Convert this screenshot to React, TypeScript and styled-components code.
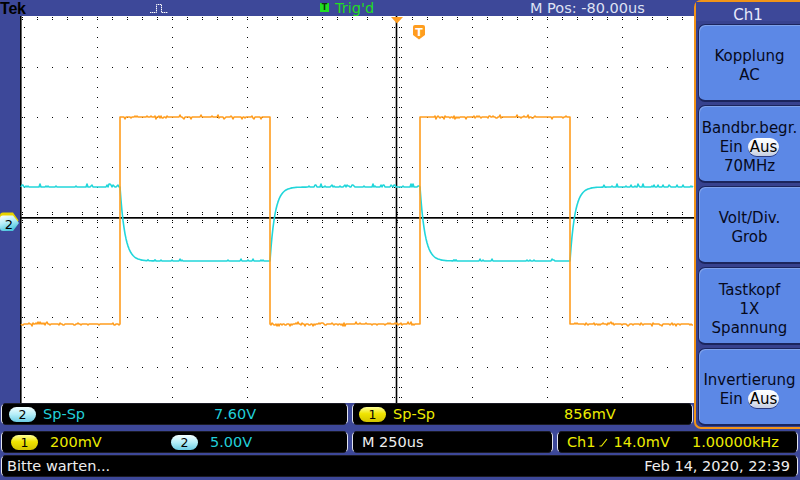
import React from 'react';
import styled, { createGlobalStyle } from 'styled-components';

const BLUE = '#3d4899';
const ORANGE = '#ff9d1f';
const MENU_ORANGE = '#f29418';
const CYAN_TRACE = '#22d6da';
const CYAN_TEXT = '#22cfd8';
const YELLOW_TEXT = '#ecec00';

const GlobalStyle = createGlobalStyle`
  html, body { margin: 0; padding: 0; background: ${BLUE}; }
  body { font-family: "DejaVu Sans", Verdana, sans-serif; }
  * { box-sizing: border-box; }
`;

/* ---------- layout ---------- */
const Screen = styled.div`
  width: 800px;
  height: 480px;
  background: ${BLUE};
  display: flex;
  flex-direction: column;
  overflow: hidden;
`;

const Upper = styled.div`
  display: flex;
  height: 429px;
  flex: none;
`;

const Main = styled.div`
  width: 694px;
  display: flex;
  flex-direction: column;
`;

const TopBar = styled.div`
  height: 16px;
  flex: none;
  display: grid;
  grid-template-columns: 150px 170px 210px 1fr;
  grid-template-rows: 16px;
  align-items: start;
  color: #dfe2f3;
  font-size: 14.5px;
  line-height: 16px;
  white-space: nowrap;
`;

const TekLogo = styled.span`
  font-family: "Liberation Sans", Arial, sans-serif;
  font-weight: 700;
  font-size: 16px;
  line-height: 18px;
  color: #000;
  letter-spacing: -0.2px;
`;

const TrigCell = styled.div`
  display: flex;
  align-items: flex-start;
  gap: 6px;
  color: #22dd22;
`;

const TrigIcon = styled.span`
  margin-top: 3px;
  width: 9px;
  height: 9px;
  background: #22e022;
  color: #0a3a0a;
  font-family: "DejaVu Sans", sans-serif;
  font-weight: 700;
  font-size: 8px;
  line-height: 9px;
  text-align: center;
`;

const PlotRow = styled.div`
  display: flex;
  height: 387px;
  flex: none;
`;

const LeftStrip = styled.div`
  width: 20px;
  flex: none;
`;

const MeasureRow = styled.div`
  height: 26px;
  flex: none;
  display: flex;
  gap: 4px;
  padding-left: 1px;
  align-items: flex-start;
`;

const Row = styled.div`
  display: flex;
  gap: 4px;
  padding-left: 1px;
  margin-top: 2px;
  height: 22px;
  flex: none;
`;

type Tone = 'cyan' | 'yellow' | 'white';
const toneColor = (t?: Tone) => (t === 'cyan' ? CYAN_TEXT : t === 'yellow' ? YELLOW_TEXT : '#eeeeee');

const Box = styled.div<{ $w: number; $pl?: number; $pr?: number }>`
  width: ${p => p.$w}px;
  height: 22px;
  flex: none;
  background: #000;
  border-style: solid;
  border-width: 1px;
  border-color: #1a1a24 #e2e4ee;
  border-radius: 5px;
  display: flex;
  align-items: center;
  padding-left: ${p => p.$pl ?? 0}px;
  padding-right: ${p => p.$pr ?? 0}px;
  font-size: 14.5px;
  line-height: 20px;
  white-space: nowrap;
  color: #eeeeee;
`;

const MeasureBox = styled(Box)`
  display: grid;
  grid-template-columns: 34px 171px auto;
  align-items: center;
`;

const Txt = styled.span<{ $tone?: Tone }>`
  color: ${p => toneColor(p.$tone)};
`;

const Badge = styled.span<{ $ch: 1 | 2 }>`
  display: inline-flex;
  align-items: center;
  justify-content: center;
  width: 27px;
  height: 15px;
  border-radius: 8px;
  background: ${p =>
    p.$ch === 1
      ? 'linear-gradient(#fdff9a, #f0e400 45%, #d2c400)'
      : 'linear-gradient(#f4ffff, #b4eef8 50%, #6ccde4)'};
  color: #000;
  font-size: 12.5px;
  line-height: 15px;
`;

const ScaleItem = styled.span<{ $w?: number }>`
  display: flex;
  align-items: center;
  gap: 12px;
  width: ${p => (p.$w ? `${p.$w}px` : 'auto')};
`;

const TrigInfo = styled.span`
  display: flex;
  align-items: center;
  width: 125px;
  color: ${YELLOW_TEXT};
`;

const SlopeIcon = styled.svg`
  margin: 0 6px 0 3px;
  flex: none;
`;

const SpaceBox = styled(Box)`
  justify-content: space-between;
`;

/* ---------- menu ---------- */
const Menu = styled.div`
  width: 106px;
  height: 429px;
  flex: none;
  border: 2px solid ${MENU_ORANGE};
  border-right: none;
  border-radius: 7px 0 0 7px;
  background: #37428f;
  display: flex;
  flex-direction: column;
  gap: 3px;
`;

const MenuHeader = styled.div`
  height: 19px;
  flex: none;
  padding-top: 6px;
  text-align: center;
  color: #e6e9fb;
  font-size: 15px;
  line-height: 14px;
  background: ${BLUE};
`;

const MenuButton = styled.div`
  margin-left: 2px;
  height: 78px;
  flex: none;
  padding-top: 7px;
  background: #5c88e6;
  border: 1px solid #1b255e;
  border-right: none;
  border-bottom-width: 2px;
  border-radius: 7px 0 0 7px;
  box-shadow: inset 1px 1px 0 rgba(255, 255, 255, 0.22);
  display: flex;
  flex-direction: column;
  align-items: center;
  justify-content: center;
  color: #070a1c;
  font-size: 15px;
  line-height: 19px;
  white-space: nowrap;
`;

const Pill = styled.span`
  display: inline-block;
  margin-left: 5px;
  padding: 0 2px;
  height: 18px;
  line-height: 18px;
  border-radius: 9px;
  background: linear-gradient(#ffffff, #eef2fa 50%, #c4cde0);
  box-shadow: 0 1px 0 #2a3a80;
  color: #000;
`;

/* ---------- waveform data ---------- */
function rng(seed: number) {
  let s = seed >>> 0;
  return () => {
    s = (s + 0x6d2b79f5) >>> 0;
    let t = s;
    t = Math.imul(t ^ (t >>> 15), t | 1);
    t ^= t + Math.imul(t ^ (t >>> 7), t | 61);
    return ((t ^ (t >>> 14)) >>> 0) / 4294967296;
  };
}

const XR = 693;

function buildDots(): string {
  const parts: string[] = [];
  const dot = (x: number, y: number) => parts.push(`M${x} ${y}h1v1h-1z`);
  for (let x = 22; x <= XR; x += 15) {
    dot(x, 17);
    dot(x, 19);
  }
  for (let y = 27; y < 403; y += 10) dot(24, y);
  for (let k = 1; k <= 9; k++) {
    const x = 22 + 75 * k;
    if (x > XR || x === 397) continue;
    for (let y = 27; y < 403; y += 10) dot(x, y);
  }
  for (let m = 1; m <= 7; m++) {
    const y = 17 + 50 * m;
    if (y === 217) continue;
    for (let x = 22; x <= XR; x += 15) dot(x, y);
  }
  for (let x = 22; x <= XR; x += 15) {
    dot(x, 212);
    dot(x, 214);
    dot(x, 220);
    dot(x, 222);
  }
  for (let y = 27; y < 403; y += 10) {
    dot(392, y);
    dot(394, y);
    dot(399, y);
    dot(401, y);
  }
  return parts.join('');
}

function buildOrange(): string {
  const r = rng(7);
  const HI = 117;
  const LO = 324;
  const edges = [120, 270, 420, 570];
  let level = LO;
  let d = `M21 ${LO}`;
  for (let x = 22; x <= XR; x++) {
    if (edges.includes(x)) {
      const prev = level;
      level = level === LO ? HI : LO;
      d += ` L${x} ${prev} L${x} ${level}`;
      continue;
    }
    const v = r();
    let dy = 0;
    if (v < 0.15) dy = 1;
    else if (v < 0.25) dy = -1;
    else if (v < 0.29) dy = 2;
    else if (v < 0.31) dy = -2;
    d += ` L${x} ${level + dy}`;
  }
  return d;
}

function buildCyan(): string {
  const r = rng(3);
  const HI = 187;
  const LO = 261;
  const edges = [
    { x: 120, from: HI, to: LO },
    { x: 270, from: LO, to: HI },
    { x: 420, from: HI, to: LO },
    { x: 570, from: LO, to: HI },
  ];
  let d = '';
  for (let x = 21; x <= XR; x++) {
    let y = HI;
    let settled = true;
    for (const e of edges) {
      if (x >= e.x) {
        const t = x - e.x;
        y = e.to + (e.from - e.to) * Math.exp(-t / 5);
        settled = t > 24;
      }
    }
    let noise = 0;
    const v = r();
    if (settled) {
      if (y < 220) {
        if (v < 0.26) noise = -1 - Math.floor(r() * 2.4);
      } else if (v < 0.12) noise = -1 - Math.floor(r() * 1.5);
    }
    d += `${x === 21 ? 'M' : ' L'}${x} ${(y + noise).toFixed(1)}`;
  }
  return d;
}

const DOTS = buildDots();
const ORANGE_PATH = buildOrange();
const CYAN_PATH = buildCyan();

/* ---------- drawings ---------- */
const Graticule: React.FC = () => (
  <svg width={674} height={387} viewBox="20 16 674 387" style={{ display: 'block' }}>
    <rect x={20} y={16} width={674} height={387} fill="#ffffff" />
    <rect x={20} y={16} width={1.6} height={387} fill="#000" />
    <path d={DOTS} fill="#000" />
    <rect x={20} y={217} width={674} height={1.7} fill="#000" />
    <rect x={395.7} y={16} width={1.6} height={387} fill="#000" />
    <path d={CYAN_PATH} fill="none" stroke={CYAN_TRACE} strokeWidth={1.6} strokeLinejoin="round" />
    <path d={ORANGE_PATH} fill="none" stroke={ORANGE} strokeWidth={1.6} strokeLinejoin="round" />
    <polygon points="391,17 403,17 397,23.5" fill={ORANGE} />
    <path d="M413 27 Q413 25 415 25 H423 Q425 25 425 27 V35 L419 39.5 L413 35 Z" fill={ORANGE} />
    <text
      x={419}
      y={36}
      textAnchor="middle"
      fontFamily="DejaVu Sans, sans-serif"
      fontWeight={700}
      fontSize={11}
      fill="#ffffff"
    >
      T
    </text>
  </svg>
);

const ChannelMarkers: React.FC = () => (
  <svg width={20} height={387} viewBox="0 16 20 387" style={{ display: 'block' }}>
    <defs>
      <linearGradient id="m2" x1="0" y1="0" x2="0.4" y2="1">
        <stop offset="0" stopColor="#ffffff" />
        <stop offset="0.5" stopColor="#b6eef8" />
        <stop offset="1" stopColor="#4cc4de" />
      </linearGradient>
    </defs>
    <path d="M3 212.5 H13 L18.5 220.5 L13 228.5 H3 Q0 228.5 0 225.5 V215.5 Q0 212.5 3 212.5 Z" fill="#e8d400" />
    <path d="M3 215.5 H13 L19 223 L13 231 H3 Q0 231 0 228 V218.5 Q0 215.5 3 215.5 Z" fill="url(#m2)" />
    <text x={9} y={228.5} textAnchor="middle" fontFamily="DejaVu Sans, sans-serif" fontSize={13} fill="#000">
      2
    </text>
  </svg>
);

const PulseIcon: React.FC = () => (
  <svg width={20} height={16} viewBox="0 0 20 16" style={{ display: 'block' }}>
    <polyline
      points="0,12.5 6.5,12.5 6.5,4.5 11.5,4.5 11.5,12.5 18,12.5"
      fill="none"
      stroke="#ffffff"
      strokeWidth={1}
      strokeDasharray="1.4 0.6"
    />
  </svg>
);

/* ---------- app ---------- */
export default function App() {
  return (
    <>
      <GlobalStyle />
      <Screen>
        <Upper>
          <Main>
            <TopBar>
              <TekLogo>Tek</TekLogo>
              <PulseIcon />
              <TrigCell>
                <TrigIcon>T</TrigIcon>
                <span>Trig'd</span>
              </TrigCell>
              <span>M Pos: -80.00us</span>
            </TopBar>
            <PlotRow>
              <LeftStrip>
                <ChannelMarkers />
              </LeftStrip>
              <Graticule />
            </PlotRow>
            <MeasureRow>
              <MeasureBox $w={347} $pl={7}>
                <Badge $ch={2}>2</Badge>
                <Txt $tone="cyan">Sp-Sp</Txt>
                <Txt $tone="cyan">7.60V</Txt>
              </MeasureBox>
              <MeasureBox $w={341} $pl={6}>
                <Badge $ch={1}>1</Badge>
                <Txt $tone="yellow">Sp-Sp</Txt>
                <Txt $tone="yellow">856mV</Txt>
              </MeasureBox>
            </MeasureRow>
          </Main>
          <Menu>
            <MenuHeader>Ch1</MenuHeader>
            <MenuButton>
              <span>Kopplung</span>
              <span>AC</span>
            </MenuButton>
            <MenuButton>
              <span>Bandbr.begr.</span>
              <span>
                Ein<Pill>Aus</Pill>
              </span>
              <span>70MHz</span>
            </MenuButton>
            <MenuButton>
              <span>Volt/Div.</span>
              <span>Grob</span>
            </MenuButton>
            <MenuButton>
              <span>Tastkopf</span>
              <span>1X</span>
              <span>Spannung</span>
            </MenuButton>
            <MenuButton>
              <span>Invertierung</span>
              <span>
                Ein<Pill>Aus</Pill>
              </span>
            </MenuButton>
          </Menu>
        </Upper>
        <Row>
          <Box $w={347} $pl={9}>
            <ScaleItem $w={160}>
              <Badge $ch={1}>1</Badge>
              <Txt $tone="yellow">200mV</Txt>
            </ScaleItem>
            <ScaleItem>
              <Badge $ch={2}>2</Badge>
              <Txt $tone="cyan">5.00V</Txt>
            </ScaleItem>
          </Box>
          <Box $w={201} $pl={9}>
            <Txt>M 250us</Txt>
          </Box>
          <Box $w={241} $pl={9}>
            <TrigInfo>
              <span>Ch1</span>
              <SlopeIcon width={9} height={12} viewBox="0 0 9 12">
                <polyline points="0.5,10 2.5,10 8,3" fill="none" stroke={YELLOW_TEXT} strokeWidth={1.2} />
              </SlopeIcon>
              <span>14.0mV</span>
            </TrigInfo>
            <Txt $tone="yellow">1.00000kHz</Txt>
          </Box>
        </Row>
        <Row>
          <SpaceBox $w={797} $pl={5} $pr={7}>
            <Txt>Bitte warten...</Txt>
            <Txt>Feb 14, 2020, 22:39</Txt>
          </SpaceBox>
        </Row>
      </Screen>
    </>
  );
}
